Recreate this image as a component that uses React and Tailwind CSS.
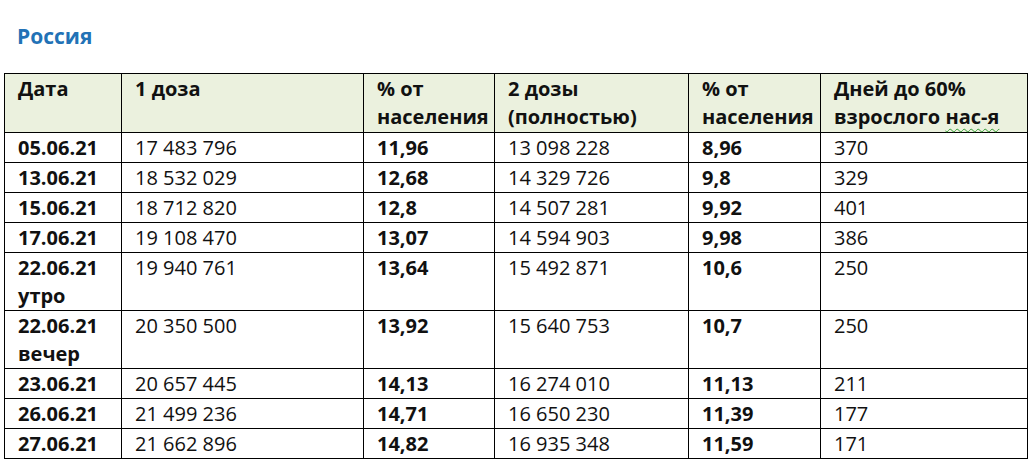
import React from 'react';

const rows = [
  { date: '05.06.21', d1: '17 483 796', p1: '11,96', d2: '13 098 228', p2: '8,96', days: '370' },
  { date: '13.06.21', d1: '18 532 029', p1: '12,68', d2: '14 329 726', p2: '9,8', days: '329' },
  { date: '15.06.21', d1: '18 712 820', p1: '12,8', d2: '14 507 281', p2: '9,92', days: '401' },
  { date: '17.06.21', d1: '19 108 470', p1: '13,07', d2: '14 594 903', p2: '9,98', days: '386' },
  { date: '22.06.21', note: 'утро', d1: '19 940 761', p1: '13,64', d2: '15 492 871', p2: '10,6', days: '250' },
  { date: '22.06.21', note: 'вечер', d1: '20 350 500', p1: '13,92', d2: '15 640 753', p2: '10,7', days: '250' },
  { date: '23.06.21', d1: '20 657 445', p1: '14,13', d2: '16 274 010', p2: '11,13', days: '211' },
  { date: '26.06.21', d1: '21 499 236', p1: '14,71', d2: '16 650 230', p2: '11,39', days: '177' },
  { date: '27.06.21', d1: '21 662 896', p1: '14,82', d2: '16 935 348', p2: '11,59', days: '171' },
];

const cell = 'border border-black align-top px-[13px] pt-[1px] leading-[28px] whitespace-nowrap';

export default function App() {
  return (
    <div className="w-[1031px] h-[467px] bg-white text-[#111] font-['Open_Sans','Noto_Sans',sans-serif] overflow-hidden">
      <h2 className="pl-[17px] pt-[22px] leading-[28px] text-[21px] font-bold text-[#2272b6]">Россия</h2>
      <table className="ml-[4px] mt-[23px] w-[1023px] table-fixed border-collapse text-[20px]">
        <colgroup>
          <col className="w-[117px]" />
          <col className="w-[242px]" />
          <col className="w-[131px]" />
          <col className="w-[194px]" />
          <col className="w-[132px]" />
          <col className="w-[207px]" />
        </colgroup>
        <thead>
          <tr className="bg-[#ebf1de] font-bold text-left">
            <th className={cell + ' pb-[1px]'}>Дата</th>
            <th className={cell + ' pb-[1px]'}>1 доза</th>
            <th className={cell + ' pb-[1px]'}>% от<br />населения</th>
            <th className={cell + ' pb-[1px]'}>2 дозы<br />(полностью)</th>
            <th className={cell + ' pb-[1px]'}>% от<br />населения</th>
            <th className={cell + ' pb-[1px]'}>
              Дней до 60%<br />взрослого{' '}
              <span className="underline decoration-wavy decoration-[#2f9a2f] decoration-1 underline-offset-[4px]">нас-я</span>
            </th>
          </tr>
        </thead>
        <tbody>
          {rows.map((r, i) => (
            <tr key={i}>
              <td className={cell + ' font-bold'}>
                {r.date}
                {r.note && (
                  <>
                    <br />
                    {r.note}
                  </>
                )}
              </td>
              <td className={cell}>{r.d1}</td>
              <td className={cell + ' font-bold'}>{r.p1}</td>
              <td className={cell}>{r.d2}</td>
              <td className={cell + ' font-bold'}>{r.p2}</td>
              <td className={cell}>{r.days}</td>
            </tr>
          ))}
        </tbody>
      </table>
    </div>
  );
}
